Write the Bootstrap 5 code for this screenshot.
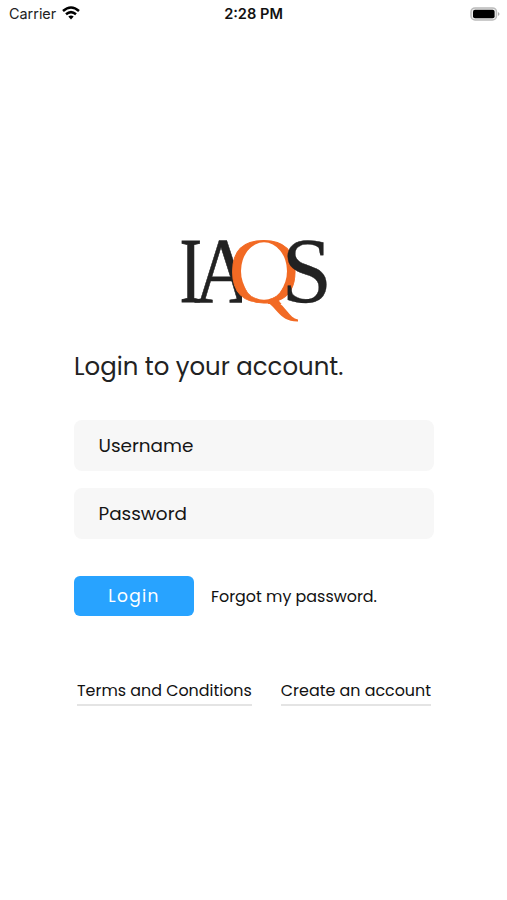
<!DOCTYPE html>
<html lang="en">
<head>
<meta charset="utf-8">
<meta name="viewport" content="width=device-width, initial-scale=1">
<title>IAQS Login</title>
<link href="https://cdn.jsdelivr.net/npm/bootstrap@5.3.0/dist/css/bootstrap.min.css" rel="stylesheet">
<style>
body{font-family:Poppins,Inter,sans-serif;background:#fff;color:#222;height:900px;overflow:hidden}
.status{height:28px;font:14.4px/28px Inter,sans-serif;padding:0 7px 0 9px}
.status>div{flex:1}
.status .clock{font-weight:600;font-size:14.6px;color:#111;padding-right:2px}
.login-box{width:360px;margin:206px 0 0 74px}
.brand{margin-left:101px;overflow:visible}
.title{font-size:24.4px;line-height:34px;font-weight:400;margin:20px 0 0;white-space:nowrap}
.login-form{margin-top:36px}
.field{height:51px;background:#f7f7f7;border:0;border-radius:8px;padding:0 24px 0 24.5px;font-size:18.4px;color:#111}
.field+.field{margin-top:17px}
.field::placeholder{color:#151515;opacity:1}
.actions{margin-top:37px;gap:17px}
.btn-login{width:120px;height:40px;background:#28a3ff;color:#fff;border:0;border-radius:6px;font-size:17px;letter-spacing:1.3px;padding:2px 0 0}
.plain{color:#111;text-decoration:none;font-size:15.9px;white-space:nowrap}
.actions .plain{padding-top:2px}
.links{margin:62px 3px 0}
.lined{border-bottom:2px solid #e4e4e4;line-height:24px;padding-top:1px;padding-bottom:1px}
</style>
</head>
<body>
<header class="status d-flex align-items-center">
  <div class="d-flex align-items-center"><span>Carrier</span>
    <svg width="18" height="14" style="margin-left:6px;margin-top:-2px" viewBox="0 0 18 14" fill="none" stroke="#000" stroke-width="2.5"><path d="M1 5Q9-2 17 5M4 8.3Q9 4 14 8.3"/><path d="M6.3 10.6Q9 8.4 11.7 10.6L9 13.4Z" fill="#000" stroke="none"/></svg>
  </div>
  <div class="clock text-center">2:28 PM</div>
  <div class="d-flex justify-content-end">
    <svg width="30" height="14" viewBox="0 0 30 14"><rect x="1" y=".9" width="25.5" height="12" rx="4" fill="#eee" stroke="#bbb" stroke-width="1.5"/><rect x="3" y="2.7" width="21.6" height="8.6" rx="2" fill="#000"/><path d="M28 5Q31 7 28 9Z" fill="#aaa"/></svg>
  </div>
</header>
<main class="login-box">
  <svg class="brand d-block" width="160" height="96" viewBox="175 234 160 96" role="img" aria-label="IAQS" font-family="'Liberation Serif',serif" font-size="94" fill="#222">
    <clipPath id="a-side"><rect x="175" y="230" width="67" height="90"/></clipPath>
    <clipPath id="q-bowl"><rect x="225" y="230" width="80" height="74"/></clipPath>
    <text transform="translate(179.4 302)scale(.72 1)" stroke="#222" stroke-width=".8">I</text>
    <g clip-path="url(#a-side)"><text transform="translate(194 302)scale(.87 1)" stroke="#222" stroke-width=".6">A</text></g>
    <g clip-path="url(#q-bowl)"><text transform="translate(228.6 302)scale(1.04 1)" fill="#f26a24" stroke="#f26a24" stroke-width=".8">Q</text></g>
    <path d="M264 301C276 304 278 322 298 321.5V319.5C289 318 286 306 276 301Z" fill="#f26a24"/>
    <ellipse cx="264" cy="271" rx="23" ry="28.8" fill="#fff"/>
    <text transform="translate(281.8 302)scale(.96 1)" stroke="#222" stroke-width=".4">S</text>
  </svg>
  <h1 class="title">Login to your account.</h1>
  <form class="login-form d-flex flex-column">
    <input class="form-control field" placeholder="Username" aria-label="Username">
    <input class="form-control field" type="password" placeholder="Password" aria-label="Password">
    <div class="actions d-flex align-items-center">
      <button class="btn btn-primary btn-login" type="button">Login</button>
      <a class="plain" href="#">Forgot my password.</a>
    </div>
  </form>
  <footer class="links d-flex justify-content-between">
    <a class="plain lined" href="#">Terms and Conditions</a>
    <a class="plain lined" href="#">Create an account</a>
  </footer>
</main>
<script src="https://cdn.jsdelivr.net/npm/bootstrap@5.3.0/dist/js/bootstrap.bundle.min.js"></script>
</body>
</html>
